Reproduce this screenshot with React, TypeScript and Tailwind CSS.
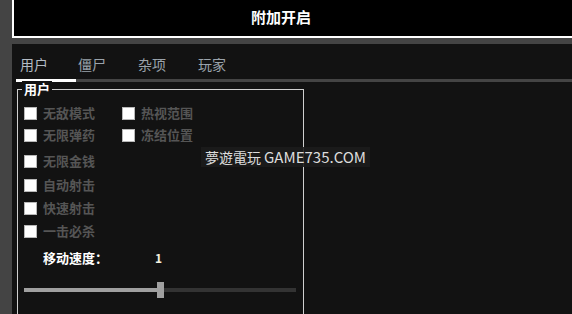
const TABS = [
  { label: "用户", w: "w-[62px] pl-1", active: true },
  { label: "僵尸", w: "w-[60px]", active: false },
  { label: "杂项", w: "w-[60px]", active: false },
  { label: "玩家", w: "w-[60px]", active: false },
];

function Check({ label }: { label: string }) {
  return (
    <div className="flex w-[98px] items-center">
      <span className="h-[13px] w-[13px] shrink-0 border border-[#b8b8b8] bg-white" />
      <span className="ml-[6px] text-[13px] font-bold leading-[14px] text-[#555555]">
        {label}
      </span>
    </div>
  );
}

export default function App() {
  return (
    <div
      className="relative h-[314px] w-[572px] overflow-hidden bg-[#444444] pl-3"
      style={{ fontFamily: '"Noto Sans CJK SC", "Noto Sans", sans-serif' }}
    >
      <header className="flex h-[38px] items-center justify-center border-b-2 border-l-2 border-white bg-black pr-[24px] pb-[2px]">
        <span className="text-[15px] font-bold text-white">附加开启</span>
      </header>

      <main className="mt-[6px] h-[270px] bg-[#121212]">
        <nav className="flex h-[35px] items-center pl-1 pt-[5px]">
          {TABS.map((t) => (
            <span
              key={t.label}
              className={`${t.w} text-[14px] ${t.active ? "text-[#b4bcc4]" : "text-[#9aa3ab]"}`}
            >
              {t.label}
            </span>
          ))}
        </nav>
        <div className="ml-1 h-[3px] bg-[#444444]">
          <div className="h-[3px] w-[60px] bg-white" />
        </div>

        <section className="relative ml-[5px] mt-[7px] h-[240px] w-[287px] border border-[#cfcfcf] pl-[6px] pt-[16px]">
          <span className="absolute -top-[9px] left-[4px] bg-[#121212] px-[2px] text-[13px] font-bold leading-[16px] text-white">
            用户
          </span>
          <div className="flex">
            <Check label="无敌模式" />
            <Check label="热视范围" />
          </div>
          <div className="mt-[8px] flex">
            <Check label="无限弹药" />
            <Check label="冻结位置" />
          </div>
          <div className="mt-[12px] flex">
            <Check label="无限金钱" />
          </div>
          <div className="mt-[10px] flex">
            <Check label="自动射击" />
          </div>
          <div className="mt-[9px] flex">
            <Check label="快速射击" />
          </div>
          <div className="mt-[9px] flex">
            <Check label="一击必杀" />
          </div>

          <div className="mt-[12px] flex h-[16px] items-center text-[13px] font-bold leading-[16px] text-white">
            <span className="ml-[19px] w-[112px]">移动速度：</span>
            <span className="text-[12px] text-[#f4f0e0]">1</span>
          </div>

          <div className="mt-[16px] flex h-[16px] w-[272px] items-center">
            <div className="h-[4px] w-[133px] bg-[#a0a0a0]" />
            <div className="h-[16px] w-[7px] bg-[#a0a0a0]" />
            <div className="h-[4px] flex-1 bg-[#333333]" />
          </div>
        </section>
      </main>

      <div className="absolute left-[201px] top-[147px] flex h-[20px] w-[169px] items-center justify-center bg-[#1c1c1c]/90 text-[14px] text-[#dddddd]">
        <span>
          夢遊電玩 <span className="text-[15px]">GAME735.COM</span>
        </span>
      </div>
    </div>
  );
}
